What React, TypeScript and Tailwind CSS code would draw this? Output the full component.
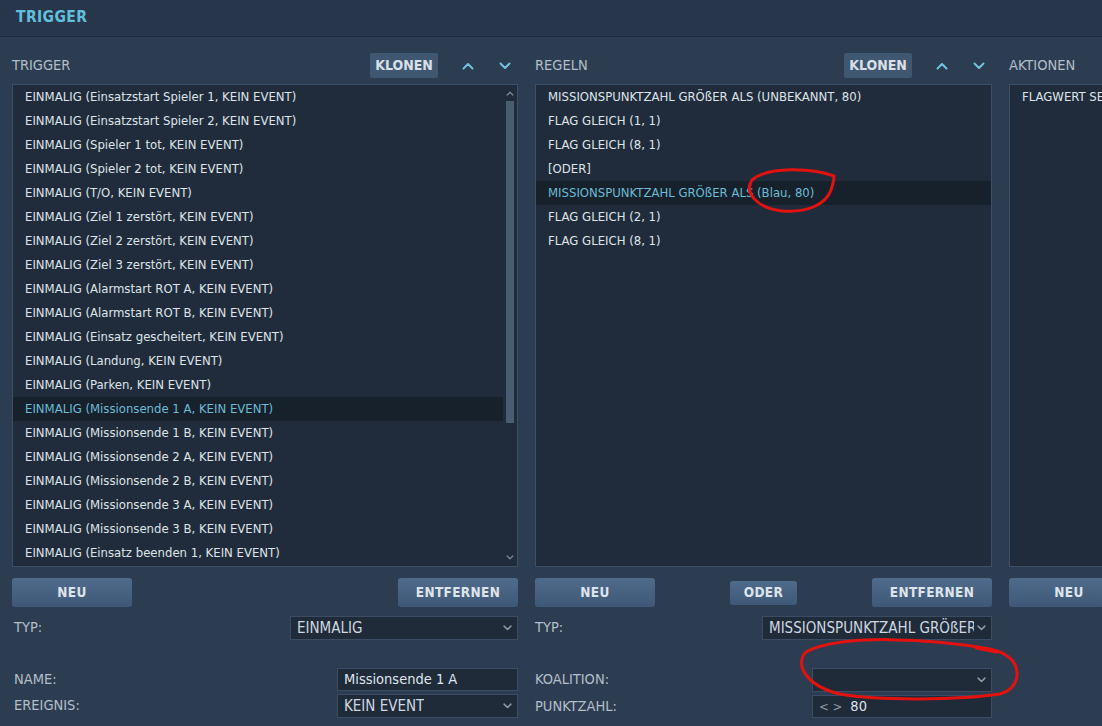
import React from 'react'

const TRIGGERS = [
  'EINMALIG (Einsatzstart Spieler 1, KEIN EVENT)',
  'EINMALIG (Einsatzstart Spieler 2, KEIN EVENT)',
  'EINMALIG (Spieler 1 tot, KEIN EVENT)',
  'EINMALIG (Spieler 2 tot, KEIN EVENT)',
  'EINMALIG (T/O, KEIN EVENT)',
  'EINMALIG (Ziel 1 zerstört, KEIN EVENT)',
  'EINMALIG (Ziel 2 zerstört, KEIN EVENT)',
  'EINMALIG (Ziel 3 zerstört, KEIN EVENT)',
  'EINMALIG (Alarmstart ROT A, KEIN EVENT)',
  'EINMALIG (Alarmstart ROT B, KEIN EVENT)',
  'EINMALIG (Einsatz gescheitert, KEIN EVENT)',
  'EINMALIG (Landung, KEIN EVENT)',
  'EINMALIG (Parken, KEIN EVENT)',
  'EINMALIG (Missionsende 1 A, KEIN EVENT)',
  'EINMALIG (Missionsende 1 B, KEIN EVENT)',
  'EINMALIG (Missionsende 2 A, KEIN EVENT)',
  'EINMALIG (Missionsende 2 B, KEIN EVENT)',
  'EINMALIG (Missionsende 3 A, KEIN EVENT)',
  'EINMALIG (Missionsende 3 B, KEIN EVENT)',
  'EINMALIG (Einsatz beenden 1, KEIN EVENT)',
]

const RULES = [
  'MISSIONSPUNKTZAHL GRÖßER ALS (UNBEKANNT, 80)',
  'FLAG GLEICH (1, 1)',
  'FLAG GLEICH (8, 1)',
  '[ODER]',
  'MISSIONSPUNKTZAHL GRÖßER ALS (Blau, 80)',
  'FLAG GLEICH (2, 1)',
  'FLAG GLEICH (8, 1)',
]

function Chevron({ up, className }: { up?: boolean; className?: string }) {
  return (
    <svg viewBox="0 0 12 8" className={className} fill="none" stroke="currentColor" strokeWidth="2" strokeLinecap="round" strokeLinejoin="round">
      {up ? <path d="M1.5 6.5 6 2l4.5 4.5" /> : <path d="M1.5 1.5 6 6l4.5-4.5" />}
    </svg>
  )
}

function Btn({ children, className = '' }: { children: React.ReactNode; className?: string }) {
  return (
    <button className={`h-[29px] rounded-[3px] bg-gradient-to-b from-[#4f6b8b] to-[#3f5877] text-[13.5px] font-bold tracking-wide text-[#dde4ec] ${className}`}>
      {children}
    </button>
  )
}

function Select({ value, w }: { value: string; w: string }) {
  return (
    <div className={`${w} h-[24px] flex items-center justify-between border border-[#3a4d62] bg-[#1f2b39] pl-[6px] pr-[5px] text-[15px] text-[#cfd7e0] overflow-hidden`}>
      <span className="whitespace-nowrap overflow-hidden">{value}</span>
      <Chevron className="w-[9px] h-[6px] text-[#8d9aa8] shrink-0 ml-[3px]" />
    </div>
  )
}

function Header({ label, tools = true }: { label: string; tools?: boolean }) {
  return (
    <div className="h-[25px] flex items-center">
      <span className="text-[14.5px] text-[#b3bec9] flex-1">{label}</span>
      {tools && (
        <>
          <button className="h-[25px] w-[68px] rounded-[2px] bg-[#3f5771] text-[14px] font-bold text-[#d9e0e8]">KLONEN</button>
          <div className="ml-[17px] w-[26px] flex justify-center"><Chevron up className="w-[12px] h-[8px] text-[#6fc3df]" /></div>
          <div className="ml-[11px] w-[26px] flex justify-center"><Chevron className="w-[12px] h-[8px] text-[#6fc3df]" /></div>
        </>
      )}
    </div>
  )
}

function Row({ text, sel }: { text: string; sel?: boolean }) {
  return (
    <div className={`h-[24px] flex items-center pl-[12px] whitespace-nowrap text-[13px] ${sel ? 'bg-[#17212c] text-[#6bbcd6]' : 'text-[#dfe4ea]'}`}>
      {text}
    </div>
  )
}

export default function App() {
  return (
    <div className="relative w-[1102px] h-[726px] overflow-hidden bg-[#2d3d51]" style={{ fontFamily: '"DejaVu Sans Condensed", "Liberation Sans", sans-serif' }}>
      <div className="h-[37px] flex items-center pl-4 bg-[#27364a] border-b border-[#1d2938]">
        <span className="text-[15.5px] font-bold tracking-wide text-[#62bfdc]">TRIGGER</span>
      </div>

      <div className="flex gap-[17px] pl-3 pt-[16px]">
        {/* triggers */}
        <div className="w-[506px] shrink-0 flex flex-col">
          <Header label="TRIGGER" />
          <div className="mt-[6px] h-[483px] border border-[#3b4f66] bg-[#202c3b] flex overflow-hidden">
            <div className="flex-1 min-w-0">
              {TRIGGERS.map((t, i) => <Row key={i} text={t} sel={i === 13} />)}
            </div>
            <div className="w-[14px] flex flex-col items-center py-[4px]">
              <Chevron up className="w-[8px] h-[5px] text-[#7b8896] mt-[2px]" />
              <div className="mt-[5px] w-[8px] h-[322px] bg-[#4a5c70]" />
              <div className="flex-1" />
              <Chevron className="w-[8px] h-[5px] text-[#7b8896] mb-[2px]" />
            </div>
          </div>
          <div className="mt-[11px] flex justify-between">
            <Btn className="w-[120px]">NEU</Btn>
            <Btn className="w-[120px]">ENTFERNEN</Btn>
          </div>
          <div className="mt-[9px] flex items-center justify-between">
            <span className="pl-[2px] text-[14.5px] text-[#b3bec9]">TYP:</span>
            <Select value="EINMALIG" w="w-[228px]" />
          </div>
          <div className="mt-[28px] flex items-center justify-between">
            <span className="pl-[2px] text-[14.5px] text-[#b3bec9]">NAME:</span>
            <div className="w-[181px] h-[23px] flex items-center border border-[#3a4d62] bg-[#1f2b39] pl-[6px] text-[14.5px] text-[#dfe5ec]">Missionsende 1 A</div>
          </div>
          <div className="mt-[3px] flex items-center justify-between">
            <span className="pl-[2px] text-[14.5px] text-[#b3bec9]">EREIGNIS:</span>
            <Select value="KEIN EVENT" w="w-[181px]" />
          </div>
        </div>

        {/* rules */}
        <div className="w-[457px] shrink-0 flex flex-col">
          <Header label="REGELN" />
          <div className="mt-[6px] h-[483px] border border-[#3b4f66] bg-[#202c3b] overflow-hidden">
            {RULES.map((t, i) => <Row key={i} text={t} sel={i === 4} />)}
          </div>
          <div className="mt-[11px] flex items-center justify-between">
            <Btn className="w-[120px]">NEU</Btn>
            <Btn className="w-[67px] !h-[24px]">ODER</Btn>
            <Btn className="w-[120px]">ENTFERNEN</Btn>
          </div>
          <div className="mt-[9px] flex items-center justify-between">
            <span className="text-[14.5px] text-[#b3bec9]">TYP:</span>
            <Select value="MISSIONSPUNKTZAHL GRÖßER ALS" w="w-[230px]" />
          </div>
          <div className="mt-[28px] flex items-center justify-between">
            <span className="text-[14.5px] text-[#b3bec9]">KOALITION:</span>
            <Select value="" w="w-[180px]" />
          </div>
          <div className="mt-[3px] flex items-center justify-between">
            <span className="text-[14.5px] text-[#b3bec9]">PUNKTZAHL:</span>
            <div className="w-[180px] h-[23px] flex items-center gap-[8px] border border-[#3a4d62] bg-[#1f2b39] pl-[6px] text-[14.5px] text-[#dfe5ec]">
              <span className="text-[#8d9aa8] text-[13px]">&lt; &gt;</span>
              <span>80</span>
            </div>
          </div>
        </div>

        {/* actions */}
        <div className="w-[200px] shrink-0 flex flex-col">
          <Header label="AKTIONEN" tools={false} />
          <div className="mt-[6px] h-[483px] border border-[#3b4f66] bg-[#202c3b] overflow-hidden">
            <Row text="FLAGWERT SETZEN (1, 1)" />
          </div>
          <div className="mt-[11px] flex">
            <Btn className="w-[120px]">NEU</Btn>
          </div>
        </div>
      </div>

      {/* red annotations */}
      <svg className="absolute inset-0 pointer-events-none" width="1102" height="726" fill="none" stroke="#e3120f" strokeWidth="3" strokeLinecap="round" strokeLinejoin="round">
        <path d="M834 176 C812 168 768 166 752 180 C744 192 756 208 782 211 C808 213 826 204 831 190 C833 184 834 180 834 176" />
        <path d="M990 649 C930 638 840 634 806 652 C794 664 806 686 840 694 C880 701 960 700 1000 694 C1020 688 1020 670 1012 660 C1004 652 990 648 976 648 L996 652" />
      </svg>
    </div>
  )
}
